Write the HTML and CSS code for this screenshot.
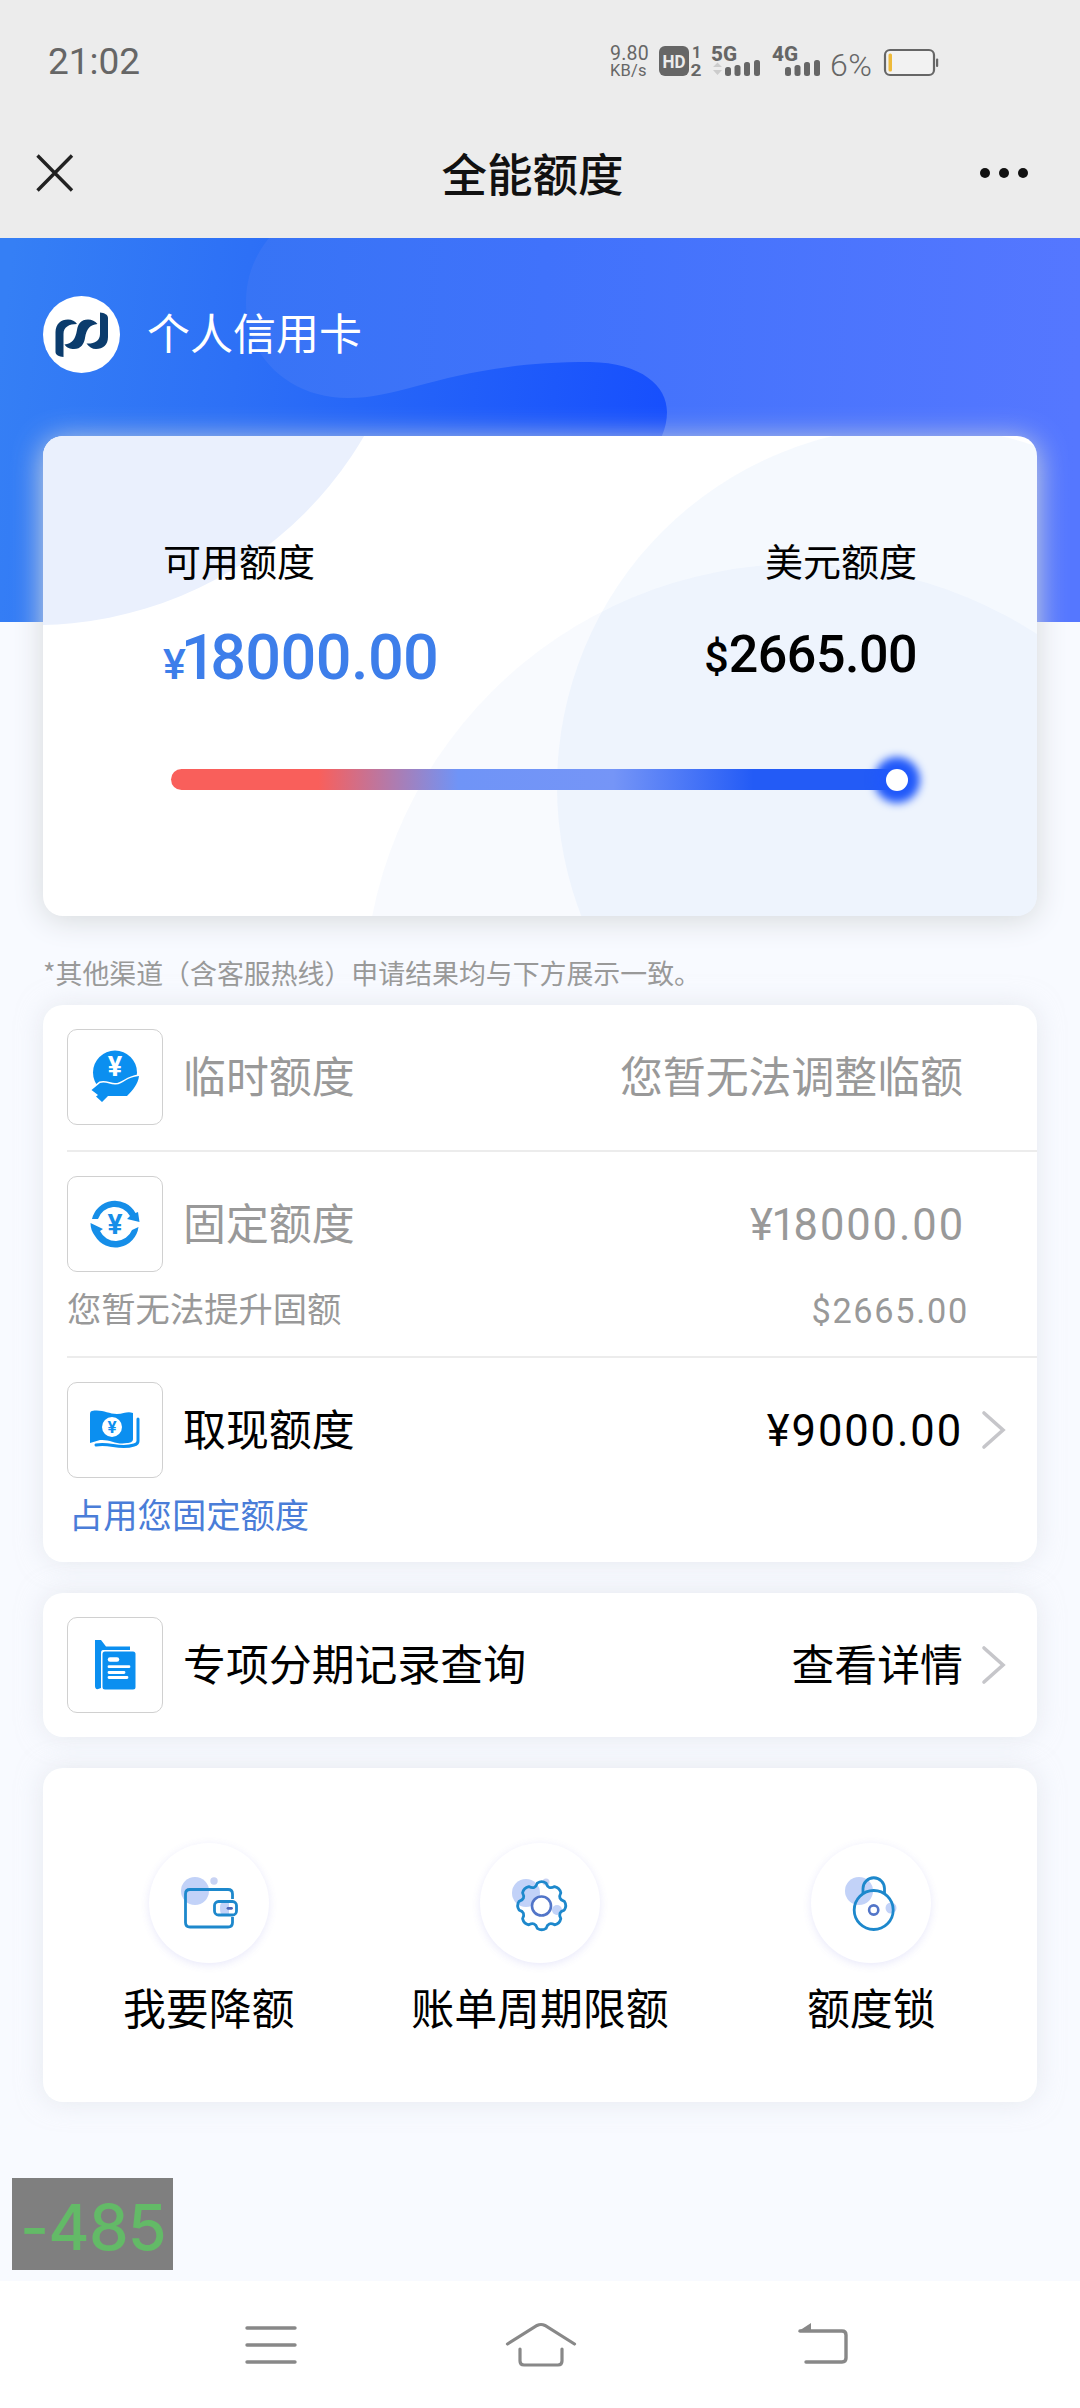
FILE: index.html
```html
<!DOCTYPE html>
<html lang="zh-CN">
<head>
<meta charset="utf-8">
<title>全能额度</title>
<link rel="stylesheet" href="styles.css">
</head>
<body>
<header class="topbar">
  <div class="status">
    <span class="clock">21:02</span>
    <div class="status-right">
      <div class="speed"><span class="speed-num">9.80</span><span class="speed-unit">KB/s</span></div>
      <svg class="signals" width="166" height="50" viewBox="0 -8 166 50" fill="#666">
        <rect x="1" y="2" width="30" height="30" rx="6"/>
        <text x="16" y="23.500" font-size="19" font-weight="700" text-anchor="middle" fill="#ececec" textLength="23" lengthAdjust="spacingAndGlyphs">HD</text>
        <text x="34" y="13.500" font-size="16" font-weight="700">1</text>
        <text x="32.500" y="31.500" font-size="16" font-weight="700" textLength="11" lengthAdjust="spacingAndGlyphs">2</text>
        <text x="53" y="17" font-size="20" font-weight="800" textLength="26" lengthAdjust="spacingAndGlyphs">5G</text>
        <path d="M55 23l4.500-4.500 4.500 4.500zM55 26l4.500 5 4.500-5z" fill="#ccc"/>
        <g>
          <rect x="67" y="23" width="6" height="9" rx="2.500"/><rect x="76.500" y="21" width="6" height="11" rx="2.500"/>
          <rect x="86" y="18" width="6" height="14" rx="2.500"/><rect x="96" y="16" width="6" height="16" rx="2.500"/>
        </g>
        <text x="114" y="17" font-size="20" font-weight="800" textLength="26" lengthAdjust="spacingAndGlyphs">4G</text>
        <g>
          <rect x="127" y="23" width="6" height="9" rx="2.500"/><rect x="136.500" y="21" width="6" height="11" rx="2.500"/>
          <rect x="146" y="18" width="6" height="14" rx="2.500"/><rect x="156" y="16" width="6" height="16" rx="2.500"/>
        </g>
      </svg>
      <span class="percent">6%</span>
      <svg class="battery" width="56" height="30" viewBox="0 0 56 30">
        <rect x="2" y="2" width="49" height="25" rx="5" fill="#f2f2f2" stroke="#666" stroke-width="2.200"/>
        <rect x="5.500" y="5.500" width="3.500" height="18" rx="1.500" fill="#eeba3a"/>
        <rect x="53" y="10.500" width="2.200" height="8.500" rx="1" fill="#666"/>
      </svg>
    </div>
  </div>
  <div class="titlebar">
    <svg class="close" width="40" height="40" viewBox="0 0 40 40"><path d="M2.500 2.500l34.500 35M37 2.500L2.500 37.500" stroke="#222" stroke-width="3.400" fill="none"/></svg>
    <h1 class="title">全能额度</h1>
    <svg class="more" width="50" height="12" viewBox="0 0 50 12" fill="#111"><circle cx="6" cy="6" r="5"/><circle cx="25" cy="6" r="5"/><circle cx="44" cy="6" r="5"/></svg>
  </div>
</header>

<main class="page">
  <svg class="hero-art" width="1080" height="384" viewBox="0 238 1080 384">
    <defs>
      <linearGradient id="base" gradientUnits="userSpaceOnUse" x1="0" y1="350" x2="670" y2="430"><stop offset="0" stop-color="#357ff5"/><stop offset=".35" stop-color="#2d70f6"/><stop offset="1" stop-color="#174ffd"/></linearGradient>
      <linearGradient id="wave" gradientUnits="userSpaceOnUse" x1="240" y1="300" x2="1080" y2="340"><stop offset="0" stop-color="#3774f5"/><stop offset=".36" stop-color="#4072fb"/><stop offset="1" stop-color="#5577ff"/></linearGradient>
    </defs>
    <rect y="238" width="1080" height="384" fill="url(#base)"/>
    <path d="M269 238C250 262 246 284 246 304C247 360 292 398 348 398C408 398 452 362 590 362C642 363 667 386 667 412C667 445 640 470 600 500L600 622H1080V238Z" fill="url(#wave)"/>
  </svg>

  <div class="owner">
    <svg class="logo" width="77" height="77" viewBox="0 0 77 77">
      <circle cx="38.500" cy="38.500" r="38.500" fill="#fff"/>
      <path d="M12.500 56V36C12.500 28 18 23.500 25 23.500C29 23.500 32 25 34 28C26 28 20.500 31 20.500 38V61C16 60.500 12.500 59 12.500 56Z" fill="#0b3c6d"/>
      <path d="M54.500 28C52 25 49 23.500 45 23.500C38 23.500 35 28 34 34C32.500 43 29 48 21.500 48.500C24 52 27 53 31 53C38 53 41 48 42 42C43.500 33 47 28.500 54.500 28Z" fill="#0b3c6d"/>
      <path d="M57 16.500C61.500 17 65 18.500 65 22V41C65 49 60 53 53 53C49 53 46 51 43.500 47.500C51 48 57 45 57 38Z" fill="#0b3c6d"/>
    </svg>
    <span class="owner-name">个人信用卡</span>
  </div>

  <section class="card quota">
    <svg class="quota-art" width="994" height="480" viewBox="43 436 994 480">
      <circle cx="35" cy="244" r="381" fill="#eaf0fd"/>
      <circle cx="917" cy="786" r="360" fill="#3d8cf0" fill-opacity=".05"/>
      <circle cx="800" cy="1000" r="436" fill="#3070e8" fill-opacity=".035"/>
    </svg>
    <div class="quota-row">
      <div class="quota-col">
        <span class="quota-label">可用额度</span>
        <span class="amount amount-cny"><span class="sign">¥</span><span class="one">1</span>8000.00</span>
      </div>
      <div class="quota-col quota-col-right">
        <span class="quota-label">美元额度</span>
        <span class="amount amount-usd"><span class="sign">$</span>2665.00</span>
      </div>
    </div>
    <div class="track"><span class="knob"></span></div>
  </section>

  <p class="note">*其他渠道（含客服热线）申请结果均与下方展示一致。</p>

  <section class="card list">
    <div class="item item-temp muted">
      <div class="row">
        <span class="icon-box"><svg width="94" height="94" viewBox="1 1 94 94">
          <circle cx="48" cy="43.500" r="22" fill="#0b8ff0"/>
          <text x="48" y="47" font-size="27" font-weight="700" text-anchor="middle" fill="#fff">¥</text>
          <path d="M24.500 61L33 54C38 52 43 55.500 48 55.500C56 56 59 48 72 47C71 55 66 61 60 67H41L35 73L29 67.500L31 66Z" fill="#0b8ff0" stroke="#fff" stroke-width="3" paint-order="stroke" stroke-linejoin="round"/>
        </svg></span>
        <span class="name">临时额度</span>
        <span class="value">您暂无法调整临额</span>
      </div>
    </div>
    <div class="item item-fixed muted">
      <div class="row">
        <span class="icon-box"><svg width="94" height="94" viewBox="1 1 94 94" fill="#168ee8">
          <path d="M25 43A23.500 23.500 0 0 1 68.500 37L71 36L72.500 46L60 43L63 40A17.500 17.500 0 0 0 31 43Z"/>
          <path d="M71.500 51A23.500 23.500 0 0 1 28 60C25 56 23.500 52 23.500 47L36 53L33 55A17.500 17.500 0 0 0 65 54Z"/>
          <text x="48" y="58" font-size="28" font-weight="700" text-anchor="middle">¥</text>
        </svg></span>
        <span class="name">固定额度</span>
        <span class="value num"><span class="yen-tight">¥</span><span class="one">1</span>8000.00</span>
      </div>
      <div class="sub"><span>您暂无法提升固额</span><span class="sub-num">$2665.00</span></div>
    </div>
    <div class="item item-cash">
      <div class="row">
        <span class="icon-box"><svg width="94" height="94" viewBox="1 1 94 94">
          <path d="M25 29C35 27 41 32 50 32C57 32 60 29 66 31V57C66 60 63 61 60 61C49 63 43 57 33 58L23 61V32C23 30 24 29 25 29Z" fill="#0b8ff0"/>
          <path d="M71 37V59Q71 62 67 63C52 68 43 60 29 63" fill="none" stroke="#0b8ff0" stroke-width="3" stroke-linecap="round"/>
          <circle cx="45" cy="45" r="10" fill="#fff"/>
          <text x="45" y="51" font-size="17" font-weight="700" text-anchor="middle" fill="#0b8ff0">¥</text>
        </svg></span>
        <span class="name">取现额度</span>
        <span class="value num">¥9000.00</span>
        <svg class="chev" width="26" height="40" viewBox="0 0 26 40"><path d="M3 3L22 20L3 37" fill="none" stroke="#c6c6ca" stroke-width="3.600" stroke-linecap="round"/></svg>
      </div>
      <div class="sub link"><span>占用您固定额度</span></div>
    </div>
  </section>

  <section class="card record">
    <div class="row">
      <span class="icon-box"><svg width="94" height="94" viewBox="1 1 94 94">
        <path d="M28 23H34L39 29.500H63V33H36Q34 33 34 36V71Q28 74 28 69Z" fill="#0b8ff0"/>
        <rect x="35.500" y="34.500" width="33" height="38" rx="2.500" fill="#0b8ff0"/>
        <path d="M43 42.500H50" stroke="#fff" stroke-width="4.500" stroke-linecap="round"/>
        <path d="M42 49.700H62M42 55.500H57M42 60.500H60" stroke="#fff" stroke-width="2.800" stroke-linecap="round"/>
      </svg></span>
      <span class="name">专项分期记录查询</span>
      <span class="value">查看详情</span>
      <svg class="chev" width="26" height="40" viewBox="0 0 26 40"><path d="M3 3L22 20L3 37" fill="none" stroke="#c6c6ca" stroke-width="3.600" stroke-linecap="round"/></svg>
    </div>
  </section>

  <section class="card actions">
    <div class="action">
      <span class="action-icon"><svg width="120" height="120" viewBox="0 0 120 120" fill="none">
        <circle cx="46" cy="48" r="14" fill="#c2d2f8"/><circle cx="65" cy="38" r="3.700" fill="#c9d3f3"/>
        <path d="M83.500 56V51Q83.500 46.500 79 46.500H41Q36.500 46.500 36.500 51V79.500Q36.500 84 41 84H79Q83.500 84 83.500 79.500V74" stroke="#1d88cc" stroke-width="2.800"/>
        <path d="M73 60H80V71H73Q71 71 71 65Q71 60 73 60Z" fill="#c2d2f8"/>
        <rect x="65.500" y="58.500" width="22" height="13.500" rx="4" stroke="#1d88cc" stroke-width="2.800"/><path d="M79 65.300H82.500" stroke="#4d65b8" stroke-width="2.800" stroke-linecap="round"/>
      </svg></span>
      <span class="action-name">我要降额</span>
    </div>
    <div class="action">
      <span class="action-icon"><svg width="120" height="120" viewBox="0 0 120 120" fill="none">
        <circle cx="46" cy="50" r="14" fill="#c2d2f8"/><circle cx="66" cy="39" r="3.500" fill="#c9d3f3"/><circle cx="77" cy="67" r="5" fill="#c2d2f8"/>
        <path transform="translate(61.700 62.700)" stroke="#1d88cc" stroke-width="2.800" stroke-linejoin="round" d="M22.600 -4.400Q25.500 0 22.600 4.400Q15.700 6.500 19.100 12.900Q18 18 12.900 19.100Q6.500 15.700 4.400 22.600Q0 25.500 -4.400 22.600Q-6.500 15.700 -12.900 19.100Q-18 18 -19.100 12.900Q-15.700 6.500 -22.600 4.400Q-25.500 0 -22.600 -4.400Q-15.700 -6.500 -19.100 -12.900Q-18 -18 -12.900 -19.100Q-6.500 -15.700 -4.400 -22.600Q0 -25.500 4.400 -22.600Q6.500 -15.700 12.900 -19.100Q18 -18 19.100 -12.900Q15.700 -6.500 22.600 -4.400Z"/>
        <circle cx="61.500" cy="63" r="9.500" stroke="#5275c8" stroke-width="2.600" fill="#fff"/>
      </svg></span>
      <span class="action-name">账单周期限额</span>
    </div>
    <div class="action">
      <span class="action-icon"><svg width="120" height="120" viewBox="0 0 120 120" fill="none">
        <circle cx="48" cy="48" r="14" fill="#c2d2f8"/><circle cx="80" cy="65" r="5.500" fill="#c2d2f8"/>
        <path d="M52 50V45.500A10.700 10.700 0 0 1 73.500 45.500V50" stroke="#1d88cc" stroke-width="2.800"/>
        <circle cx="62.700" cy="67" r="19.500" stroke="#1d88cc" stroke-width="2.800"/>
        <circle cx="62.700" cy="67" r="4.600" stroke="#5275c8" stroke-width="2.600"/>
      </svg></span>
      <span class="action-name">额度锁</span>
    </div>
  </section>
  <div class="meter">-485</div>
</main>

<nav class="navbar">
  <svg width="52" height="44" viewBox="0 0 52 44"><path d="M2 5H50M2 22H50M2 39H50" stroke="#888" stroke-width="3.400" stroke-linecap="round"/></svg>
  <svg class="home" width="72" height="48" viewBox="0 0 72 48" fill="none" stroke="#888" stroke-width="3.200" stroke-linecap="round"><path d="M2.500 23L32 4.500Q36 2.500 40 4.500L69.500 23"/><path d="M15 28V40Q15 44 19 44H53Q57 44 57 40V28"/></svg>
  <svg width="52" height="44" viewBox="0 0 52 44"><path d="M3 8H45Q49 8 49 12V35Q49 39 45 39H9" fill="none" stroke="#888" stroke-width="3.400" stroke-linecap="round"/><path d="M1 8.500L14 0V9Z" fill="#888"/></svg>
</nav>
</body>
</html>
```
FILE: styles.css
```css
* { box-sizing: border-box; }

body {
  margin: 0;
  width: 1080px;
  height: 2408px;
  display: flex;
  flex-direction: column;
  background: #f8faff;
  color: #000;
  font-family: "Noto Sans CJK SC", "Noto Sans", sans-serif;
}

svg { display: block; flex: none; }
svg text { font-family: Roboto, "Liberation Sans", sans-serif; }

.topbar {
  height: 238px;
  background: #ececec;
}

.status {
  height: 122px;
  padding: 0 141px 0 48px;
  display: flex;
  align-items: center;
  justify-content: space-between;
  font-family: Roboto, "Liberation Sans", sans-serif;
  color: #666;
}
.clock { padding-top: 2px; font-size: 37px; line-height: 44px; }
.status-right { display: flex; align-items: center; }
.speed {
  width: 48px;
  padding-top: 2px;
  display: flex;
  flex-direction: column;
  letter-spacing: .2px;
}
.speed-num { font-size: 19.500px; line-height: 17px; }
.speed-unit { font-size: 16.500px; line-height: 18px; }
.percent {
  width: 59px;
  padding: 8px 0 0 6px;
  font-size: 32px;
  line-height: 30px;
  font-weight: 300;
  letter-spacing: .5px;
}
.battery { margin-top: 3px; }

.titlebar {
  height: 102px;
  padding: 0 50px 0 35px;
  display: grid;
  grid-template-columns: 1fr auto 1fr;
  align-items: center;
}
.title {
  margin: 0 0 2px;
  font-size: 45.500px;
  line-height: 60px;
  font-weight: 500;
  color: #111;
}
.more { justify-self: end; margin-right: 1px; }

.page {
  position: relative;
  flex: none;
  height: 2043px;
  padding: 0 43px;
}
.hero-art {
  position: absolute;
  top: 0;
  left: 0;
}

.owner {
  position: relative;
  height: 198px;
  padding-bottom: 6px;
  display: flex;
  align-items: center;
  gap: 27px;
  color: #fff;
  font-size: 43px;
}
.owner-name { padding-bottom: 6px; line-height: 60px; }

.card {
  position: relative;
  width: 994px;
  background: #fff;
  border-radius: 20px;
  box-shadow: 0 0 26px rgba(215, 218, 224, .55);
}

.quota {
  height: 480px;
  padding: 96px 120px 0;
  box-shadow: 0 4px 30px #d5d9db;
}
.quota-art {
  position: absolute;
  inset: 0;
  border-radius: 20px;
}
.quota-row {
  position: relative;
  display: flex;
  justify-content: space-between;
}
.quota-col { display: flex; flex-direction: column; }
.quota-col-right { align-items: flex-end; }
.quota-label { font-size: 38px; line-height: 56px; }
.amount {
  font-family: Roboto, "Liberation Sans", sans-serif;
  font-weight: 500;
  line-height: 80px;
}
.amount-cny { margin-top: 30px; color: #3d7eea; font-size: 63px; letter-spacing: -.6px; }
.amount-cny .sign { font-size: 43px; letter-spacing: -5px; }
.amount-cny .one { letter-spacing: -6.500px; }
.amount-usd { margin-top: 27px; font-size: 52px; letter-spacing: -.5px; }
.amount-usd .sign { font-size: 43px; letter-spacing: 0; }

.track {
  position: relative;
  width: 737px;
  height: 21px;
  margin: 65px 0 0 8px;
  border-radius: 11px;
  display: flex;
  justify-content: flex-end;
  background: linear-gradient(90deg, #f95f5b 0 20%, #6f94f7 39%, #7595f7 60%, #235bf6 79%);
}
.knob {
  width: 22px;
  height: 22px;
  border-radius: 50%;
  background: #fff;
  box-shadow: 0 0 9px 12px #2159fa;
}

.note {
  position: relative;
  margin: 37px 0 12px;
  height: 40px;
  font-size: 26.900px;
  line-height: 40px;
  color: #999;
}

.list { height: 557px; padding-left: 24px; }
.item { border-bottom: 2px solid #ececec; }
.item-temp { height: 147px; padding-top: 24px; }
.item-fixed { height: 206px; padding-top: 24px; }
.item-cash { border: 0; padding-top: 24px; }
.muted { color: #999; }

.row {
  height: 96px;
  padding-right: 30px;
  display: flex;
  align-items: center;
  font-size: 42.900px;
  line-height: 60px;
}
.icon-box {
  width: 96px;
  height: 96px;
  flex: none;
  border: 1px solid #d0d0d0;
  border-radius: 10px;
}
.name { margin-left: 20px; padding-bottom: 6px; }
.value { margin-left: auto; margin-right: 44px; padding-bottom: 6px; }
.num {
  font-family: Roboto, "Liberation Sans", sans-serif;
  font-size: 43.500px;
  letter-spacing: 1.900px;
  margin-right: 42px;
  padding: 4px 0 0;
}
.num .yen-tight { letter-spacing: -1.500px; }
.num .one { letter-spacing: -2.300px; }
.chev { margin-left: -26px; }
.num + .chev { margin-left: -24px; }

.sub {
  display: flex;
  justify-content: space-between;
  padding: 10px 68px 0 0;
  font-size: 34.300px;
  line-height: 50px;
}
.sub-num {
  padding-top: 4px;
  font-family: Roboto, "Liberation Sans", sans-serif;
  letter-spacing: 1.700px;
}
.link { padding-left: 2px; color: #4a7dd8; }

.record { height: 144px; margin-top: 31px; padding: 24px 0 0 24px; }

.actions {
  height: 334px;
  margin-top: 31px;
  padding-top: 75px;
  display: grid;
  grid-template-columns: repeat(3, 1fr);
}
.action {
  display: flex;
  flex-direction: column;
  align-items: center;
  gap: 13px;
}
.action-icon {
  width: 120px;
  height: 120px;
  border-radius: 50%;
  box-shadow: 0 2px 9px rgba(90, 90, 220, .14);
}
.action-name { font-size: 42.900px; line-height: 60px; }

.meter {
  position: absolute;
  left: 12px;
  top: 1940px;
  width: 161px;
  height: 92px;
  padding-left: 8px;
  background: #7f7f7f;
  color: #63ba67;
  font: 500 63px/98px Inter, "Liberation Sans", sans-serif;
  letter-spacing: -.800px;
}

.navbar {
  height: 127px;
  flex: none;
  padding: 0 231px 0 245px;
  display: flex;
  align-items: center;
  justify-content: space-between;
  background: #fff;
}
.home { margin-right: 12px; }
```
